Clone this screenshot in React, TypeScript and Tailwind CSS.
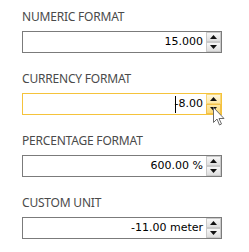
import React from "react";

interface SpinFieldProps {
    label: string
    value: string
    focused?: boolean
}

const Arrow = ({ up }: { up: boolean }) => (
    <svg width="7" height="4" viewBox="0 0 7 4" className="block">
        {up ? <path d="M0 4 L3.5 0 L7 4 Z" fill="#111" /> : <path d="M0 0 L7 0 L3.5 4 Z" fill="#111" />}
    </svg>
)

const SpinField: React.FC<SpinFieldProps> = ({ label, value, focused }) => {
    return (
        <div className="mb-[18px]">
            <div className="h-[16px] leading-[16px] text-[12px] tracking-[-0.2px] text-[#4a4a4a] mb-[6px]" style={{ fontFamily: '"Noto Sans", "Open Sans", sans-serif' }}>
                {label}
            </div>
            <div className={`relative flex h-[22px] w-[200px] border ${focused ? 'border-[#f5c33b]' : 'border-[#7b7b7b]'} bg-white`}>
                <div className="flex-1 flex items-center justify-end pr-[3px] text-[11px] text-black" style={{ fontFamily: '"DejaVu Sans", Verdana, sans-serif' }}>
                    {focused && <span className="inline-block w-px h-[17px] bg-black mr-[-1px]" />}
                    {value}
                </div>
                <div className="flex flex-col w-[15px]">
                    <div className={`h-[10px] flex items-center justify-center border ${focused ? 'border-[#f7d679] bg-gradient-to-b from-[#fff7dd] to-[#fde7a6]' : 'border-[#c9c9c9] bg-gradient-to-b from-[#f8f8f8] to-[#dedede]'}`}>
                        <Arrow up />
                    </div>
                    <div className={`h-[10px] flex items-center justify-center border ${focused ? 'border-[#f2c04a] bg-gradient-to-b from-[#fde9a9] to-[#fbd978]' : 'border-[#c9c9c9] bg-gradient-to-b from-[#f8f8f8] to-[#dedede]'}`}>
                        <Arrow up={false} />
                    </div>
                </div>
            </div>
        </div>
    )
}

export default function App() {
    return (
        <div className="relative w-[249px] h-[252px] bg-white pt-[9px] pl-[22px] overflow-hidden">
            <SpinField label="NUMERIC FORMAT" value="15.000" />
            <SpinField label="CURRENCY FORMAT" value="-8.00" focused />
            <SpinField label="PERCENTAGE FORMAT" value="600.00 %" />
            <SpinField label="CUSTOM UNIT" value="-11.00 meter" />
            {/* mouse pointer */}
            <svg className="absolute left-[213px] top-[107px]" width="12" height="19" viewBox="0 0 12 19">
                <path d="M0.5 0.5 L0.5 15.5 L4 12 L6.5 18 L8.5 17 L6 11.5 L11 11.5 Z" fill="#fff" stroke="#6a6a6a" strokeWidth="1" />
            </svg>
        </div>
    )
}
